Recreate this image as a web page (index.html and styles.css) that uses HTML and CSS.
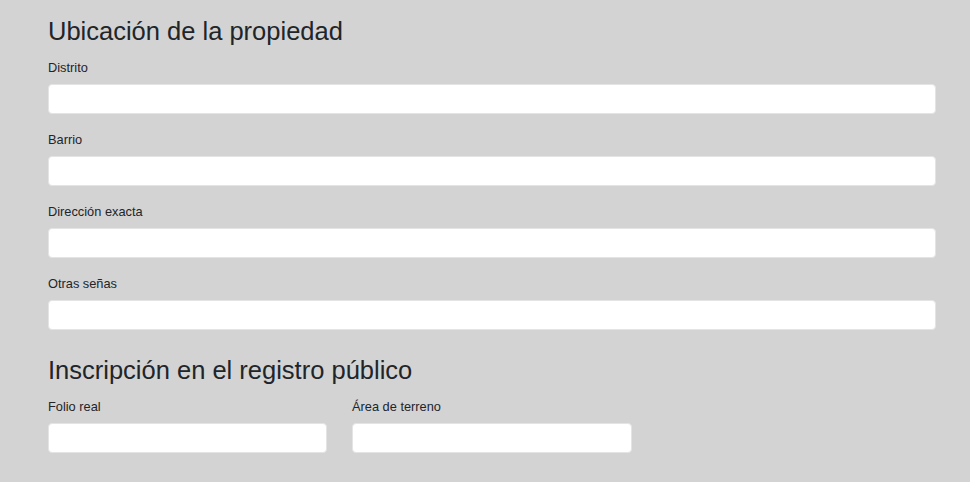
FILE: index.html
```html
<!DOCTYPE html>
<html lang="es">
<head>
<meta charset="utf-8">
<link rel="stylesheet" href="styles.css">
</head>
<body>
<main class="container">
  <section class="section">
    <h2 class="title">Ubicación de la propiedad</h2>
    <div class="field">
      <label class="label">Distrito</label>
      <input class="input" type="text">
    </div>
    <div class="field">
      <label class="label">Barrio</label>
      <input class="input" type="text">
    </div>
    <div class="field">
      <label class="label">Dirección exacta</label>
      <input class="input" type="text">
    </div>
    <div class="field">
      <label class="label">Otras señas</label>
      <input class="input" type="text">
    </div>
  </section>
  <section class="section">
    <h2 class="title">Inscripción en el registro público</h2>
    <div class="row">
      <div class="field">
        <label class="label">Folio real</label>
        <input class="input" type="text">
      </div>
      <div class="field">
        <label class="label">Área de terreno</label>
        <input class="input" type="text">
      </div>
    </div>
  </section>
</main>
</body>
</html>
```
FILE: styles.css
```css
html, body {
  margin: 0;
  padding: 0;
  background: #d3d3d3;
  font-family: "Liberation Sans", Arial, sans-serif;
  color: #212529;
}
.container {
  width: 888px;
  margin: 0 0 0 48px;
  padding-top: 16px;
}
.title {
  margin: 0 0 13px 0;
  font-size: 25.5px;
  font-weight: 400;
  line-height: 31px;
}
.field {
  display: flex;
  flex-direction: column;
  margin-bottom: 18px;
}
.label {
  font-size: 12.8px;
  line-height: 16px;
  margin-bottom: 8px;
}
.input {
  box-sizing: border-box;
  height: 30px;
  border: 1px solid #e4e4e4;
  border-radius: 4px;
  background: #fff;
  margin: 0;
  padding: 0 8px;
  font-size: 14px;
}
.row {
  display: grid;
  grid-template-columns: 279px 280px;
  column-gap: 25px;
}
.section + .section {
  margin-top: 25px;
}
```
